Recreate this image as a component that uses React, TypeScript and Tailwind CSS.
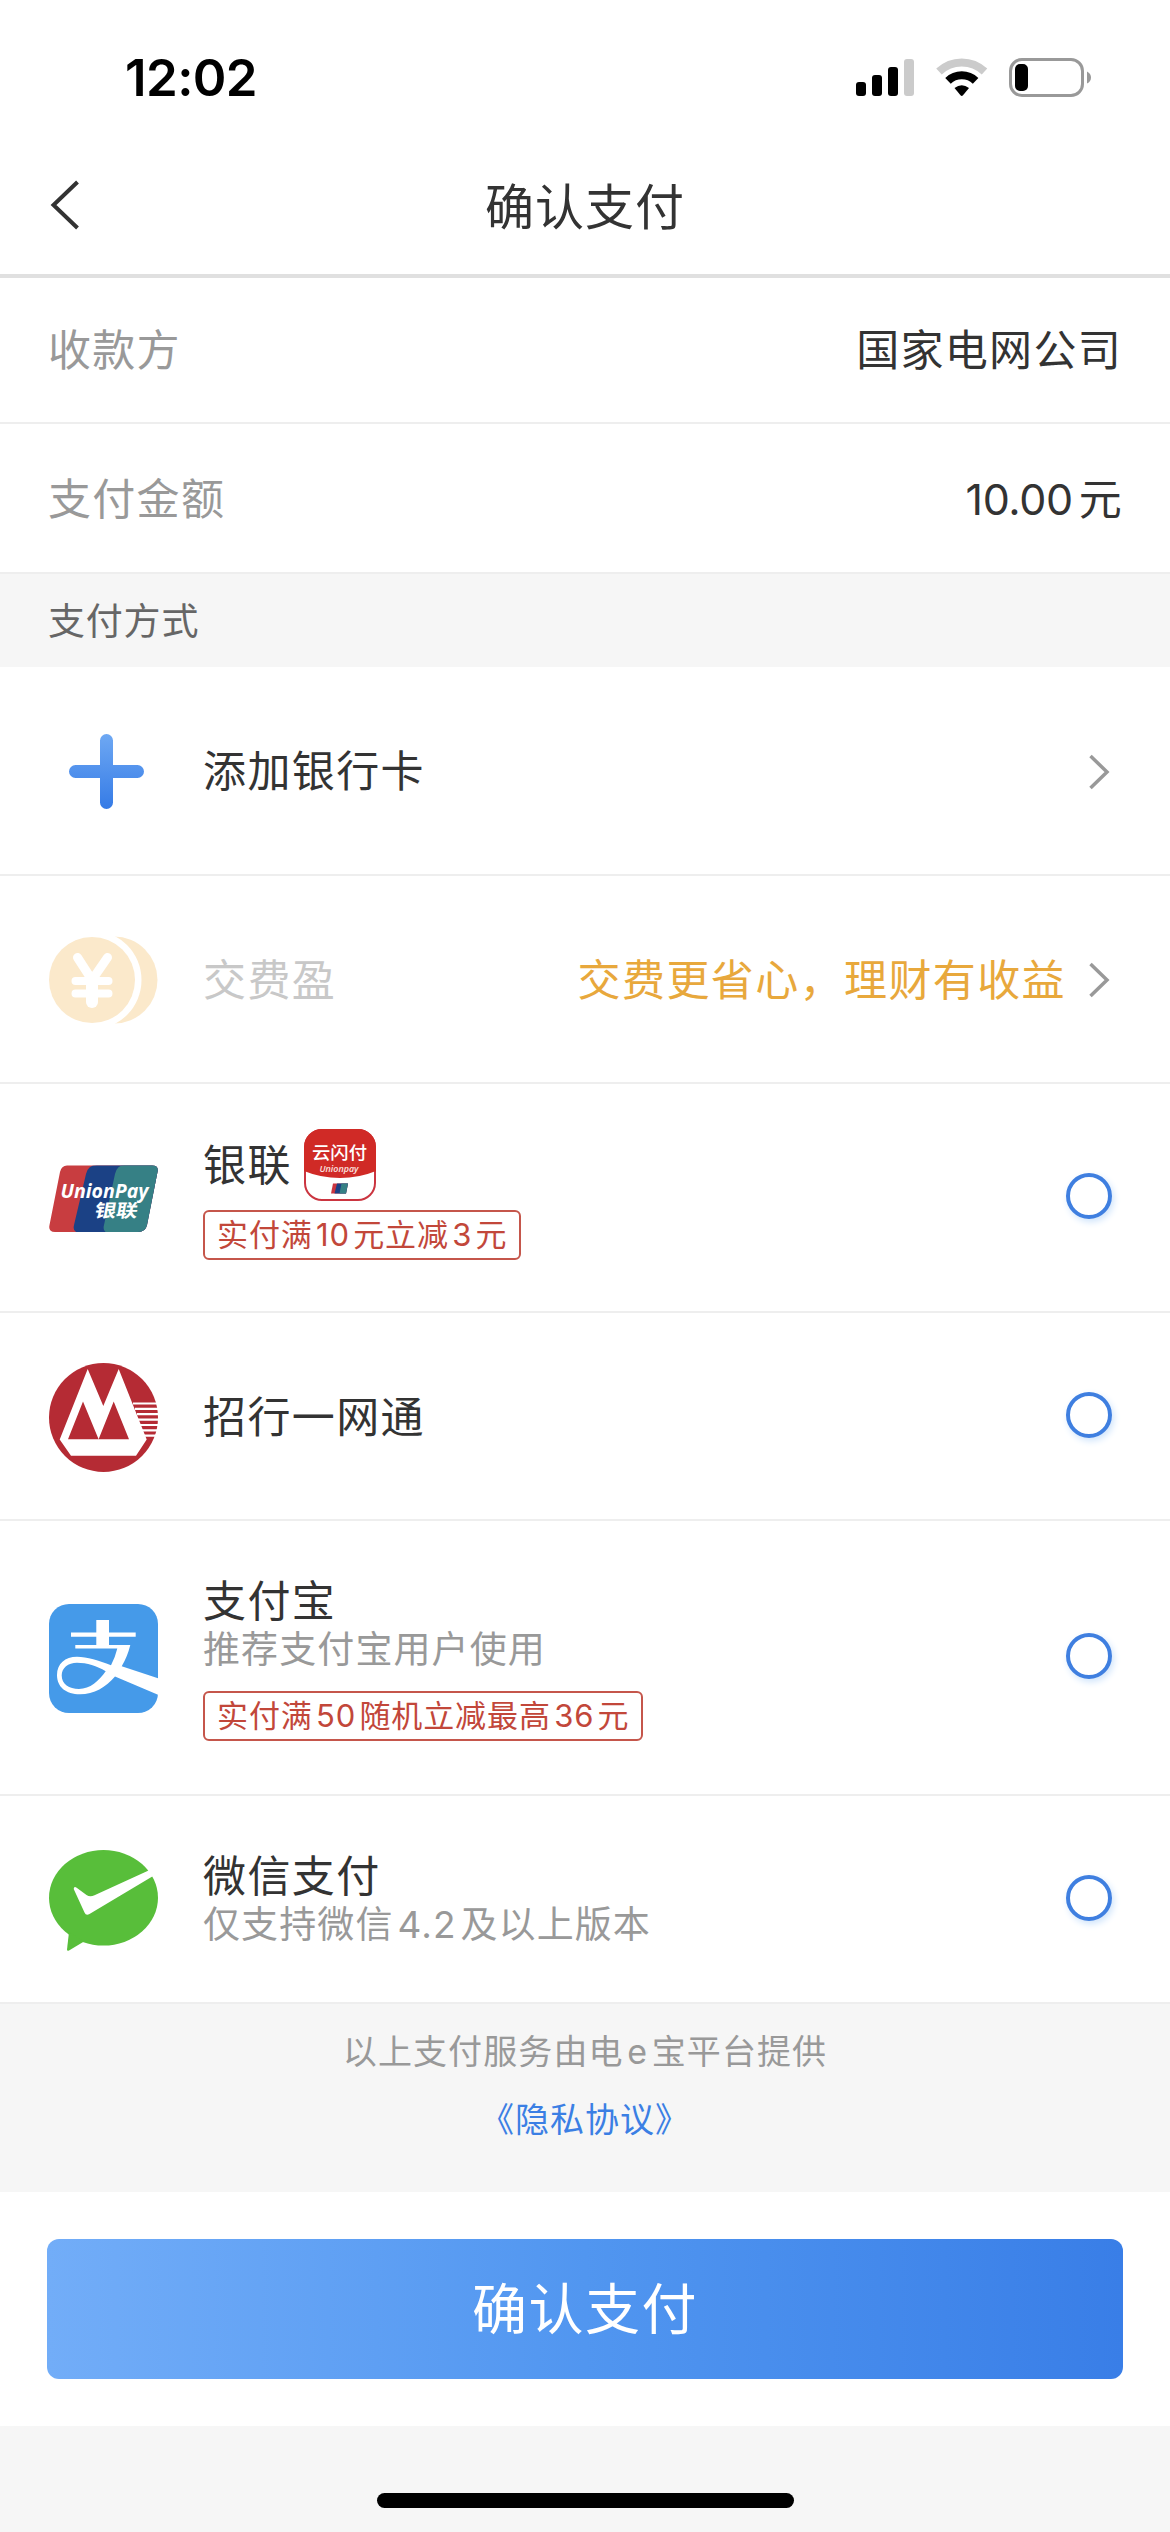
import React from "react";

const FONT = "font-['Inter','Noto_Sans_CJK_SC',sans-serif]";

// Latin runs inside Chinese text get a little air on both sides
function Mixed({ text }: { text: string }) {
  return (
    <>
      {text.split(/([\dA-Za-z.]+)/).map((part, i) =>
        i % 2 === 1 ? (
          <span key={i} className={text.startsWith(part) ? "mr-[0.14em] tracking-[-0.4px]" : "ml-[0.11em] mr-[0.1em]"}>
            {part}
          </span>
        ) : (
          part
        )
      )}
    </>
  );
}

function StatusBar() {
  return (
    <div className="flex h-[118px] items-end justify-between pb-[13px] pl-[125px] pr-[79px]">
      <span className="text-[51px] leading-[54px] font-semibold tracking-[-0.6px] text-black">12:02</span>
      <svg width="235" height="39" viewBox="0 0 235 39" className="mb-[8px]">
        <rect x="0" y="24" width="10" height="14" rx="3" />
        <rect x="16" y="17" width="10" height="21" rx="3" />
        <rect x="32" y="9" width="10" height="29" rx="3" />
        <rect x="48" y="1" width="10" height="37" rx="3" fill="#cbcbcb" />
        <path d="M83 13.500A33 33 0 0 1 128.500 13.500" fill="none" stroke="#cbcbcb" strokeWidth="8" />
        <path d="M92 22.800A20 20 0 0 1 119.600 22.800" fill="none" stroke="#000" strokeWidth="8" />
        <path d="M98.500 30Q105.700 24.500 113 30L107 37.300Q105.700 38.600 104.500 37.300Z" />
        <rect x="154.500" y="1.500" width="72" height="36" rx="11.500" fill="none" stroke="#999" strokeWidth="3" />
        <rect x="159" y="6" width="13" height="27" rx="5" />
        <path d="M231 13.500Q235 15.500 235 19.500Q235 23.500 231 25.500Z" fill="#999" />
      </svg>
    </div>
  );
}

function NavBar() {
  return (
    <div className="flex h-[160px] items-center border-b-4 border-[#e0e0e0] pt-[18px] pl-[49px] pr-[49px]">
      <svg width="32" height="54" viewBox="0 0 32 54" fill="none" stroke="#333" strokeWidth="4">
        <path d="M28.500 4L4.500 27L28.500 50" />
      </svg>
      <h1 className="flex-1 pt-[5px] text-center text-[49px] leading-[60px] tracking-[1px] text-[#333]">确认支付</h1>
      <div className="w-[32px]" />
    </div>
  );
}

function PlusIcon() {
  return (
    <svg width="109" height="109" viewBox="0 0 109 109">
      <defs>
        <linearGradient id="plus" x1="0" y1="17" x2="0" y2="92" gradientUnits="userSpaceOnUse">
          <stop offset="0" stopColor="#6ea8f3" />
          <stop offset="1" stopColor="#357be6" />
        </linearGradient>
      </defs>
      <path
        d="M57.500 17a6.500 6.500 0 0 1 6.500 6.500V48H88.500a6.500 6.500 0 0 1 0 13H64V85.500a6.500 6.500 0 0 1-13 0V61H26.500a6.500 6.500 0 0 1 0-13H51V23.500a6.500 6.500 0 0 1 6.500-6.500Z"
        fill="url(#plus)"
      />
    </svg>
  );
}

function CoinIcon() {
  return (
    <svg width="109" height="88" viewBox="0 0 109 88">
      <circle cx="65" cy="44" r="43.500" fill="#fbe9cb" />
      <circle cx="43" cy="44" r="49.500" fill="#fff" />
      <circle cx="43" cy="44" r="43" fill="#fbe9cb" />
      <g fill="none" stroke="#fff" strokeLinecap="round">
        <path d="M28.500 21.500L43 44L58.500 21.500" strokeWidth="9" strokeLinejoin="round" />
        <path d="M43 44V66" strokeWidth="12" />
        <path d="M26.500 45H59.500M26.500 57.500H59.500" strokeWidth="8" />
      </g>
    </svg>
  );
}

function UnionPayIcon() {
  return (
    <svg width="109" height="68" viewBox="0 0 109 68">
      <defs>
        <clipPath id="card">
          <path d="M18 0.500H103Q110 0.500 108.500 7L98 60Q96.500 67 89 67H6Q-1 67 0.500 60L11 7Q12.500 0.500 18 0.500Z" />
        </clipPath>
      </defs>
      <g clipPath="url(#card)">
        <rect width="109" height="68" fill="#c83d40" />
        <path d="M48 0H109V68H32Q23 68 25 60L37 9Q39 0 48 0Z" fill="#1b4185" />
        <path d="M76 0H109V68H61Q53 68 55 60L66 9Q68 0 76 0Z" fill="#368085" />
      </g>
      <text x="11.500" y="32.500" textLength="88" lengthAdjust="spacingAndGlyphs" className="font-['Open_Sans',sans-serif] text-[20px] font-bold italic" fill="#fff">
        UnionPay
      </text>
      <text x="54" y="52" transform="skewX(-10)" textLength="43" lengthAdjust="spacingAndGlyphs" className="font-['Noto_Sans_CJK_SC',sans-serif] text-[18px] font-bold" fill="#fff">
        银联
      </text>
    </svg>
  );
}

function QuickPassIcon() {
  return (
    <svg width="72" height="72" viewBox="0 0 72 72">
      <defs>
        <clipPath id="tile">
          <rect width="72" height="72" rx="18" />
        </clipPath>
      </defs>
      <rect x="1" y="1" width="70" height="70" rx="17" fill="#fff" stroke="#cb3540" strokeWidth="2" />
      <path clipPath="url(#tile)" d="M0 0H72V42Q55 49 36 49Q17 49 0 42Z" fill="#d02a26" />
      <text x="8" y="30" textLength="55" lengthAdjust="spacingAndGlyphs" className="font-['Noto_Sans_CJK_SC',sans-serif] text-[17.500px] font-medium" fill="#fff">
        云闪付
      </text>
      <text x="15.500" y="43" textLength="39" lengthAdjust="spacingAndGlyphs" className="font-['Open_Sans',sans-serif] text-[8.500px] font-semibold italic" fill="#fbe3e0">
        Unionpay
      </text>
      <path d="M29 54.500H44L42 64.500H27Z" fill="#cb3540" />
      <path d="M33 54.500H44L42 64.500H30.500Z" fill="#1b4185" />
      <path d="M37.500 54.500H44L42 64.500H35.500Z" fill="#368085" />
    </svg>
  );
}

function CmbIcon() {
  return (
    <svg width="109" height="109" viewBox="0 0 109 109">
      <circle cx="54.500" cy="54.500" r="54.500" fill="#b52b34" />
      <path d="M84 40.500H109M86 45.800H109M88 51.200H109M89 56.600H109M91 62H109M93 67.300H109M95 72.700H109" stroke="#fff" strokeWidth="2.200" />
      <path d="M38.700 6L54.300 43L69.700 6L97.700 76.600L87 92.800H22L10.700 76.600Z" fill="#fff" />
      <path d="M34 38.500L49.600 76.300H19ZM64.700 38.500L80 76.300H49.600Z" fill="#b52b34" />
    </svg>
  );
}

function AlipayIcon() {
  return (
    <svg width="109" height="109" viewBox="0 0 109 109">
      <path d="M20 0H89A20 20 0 0 1 109 20V89A20 20 0 0 1 89 109H20A20 20 0 0 1 0 89V20A20 20 0 0 1 20 0Z" fill="#459ae9" />
      <path
        fill="#fff"
        fillRule="evenodd"
        d="M47.300 16H60V28.400H86.700V32.700H60V41H81.300Q78.500 52.500 72.700 62.300L109 74.300V90.700L66 72.400C57 83 45 90.300 31 90.300C17 90.300 8 83 8 71C8 60 16 52.800 28 52.800C38 52.800 50 56.500 62 61.300Q66 54 68.300 44.500H26.300V41H47.300V32.700H22V28.400H47.300ZM56.700 67.300C48 62 38 58.800 28 58.800C19 58.800 12.700 64 12.700 71.500C12.700 80 20 85 30 85C41 85 50 77 56.700 67.300Z"
      />
    </svg>
  );
}

function WechatIcon() {
  return (
    <svg width="109" height="101" viewBox="0 0 109 101">
      <ellipse cx="54.500" cy="47.800" rx="54.500" ry="47.800" fill="#58be3a" />
      <path d="M20 82L18 99.500Q18 101.500 20 100.500L35 91.500Z" fill="#58be3a" />
      <path
        d="M24.700 39Q25 35.500 28 38L37.500 45Q41 47.500 45.500 45.300L98.500 21Q104 17 109 12V24L103.300 26.500L40.500 64Q37 66 35.500 62.500Z"
        fill="#fff"
      />
    </svg>
  );
}

function Chevron() {
  return (
    <svg width="24" height="38" viewBox="0 0 24 38" fill="none" stroke="#999" strokeWidth="3.500">
      <path d="M3.500 3L20 19L3.500 35" />
    </svg>
  );
}

function Radio() {
  return <div className="mr-[11px] mb-[5px] h-[46px] w-[46px] rounded-full border-4 border-[#3f7fe0] shadow-[2px_3px_7px_#cfe4fb]" />;
}

function Badge({ text }: { text: string }) {
  return (
    <div className="w-fit rounded-[6px] border-2 border-[#c5564b] px-[12px] text-[31px] leading-[46px] tracking-[0.9px] text-[#c2473a]">
      <Mixed text={text} />
    </div>
  );
}

interface Method {
  name: string;
  icon: React.ReactNode;
  height: string;
  nameIcon?: React.ReactNode;
  note?: string;
  badge?: string;
}

const methods: Method[] = [
  { name: "银联", icon: <UnionPayIcon />, height: "h-[229px]", nameIcon: <QuickPassIcon />, badge: "实付满10元立减3元" },
  { name: "招行一网通", icon: <CmbIcon />, height: "h-[208px]" },
  { name: "支付宝", icon: <AlipayIcon />, height: "h-[275px]", note: "推荐支付宝用户使用", badge: "实付满50随机立减最高36元" },
  { name: "微信支付", icon: <WechatIcon />, height: "h-[208px]", note: "仅支持微信4.2及以上版本" },
];

function MethodRow({ method }: { method: Method }) {
  return (
    <div className={`flex items-center border-b-2 border-[#eeeeee] pt-[2px] pl-[49px] pr-[47px] ${method.height}`}>
      <div className="w-[154px] shrink-0">{method.icon}</div>
      <div className="flex-1">
        <div className="flex items-center gap-[12px]">
          <span className="text-[43px] leading-[50px] tracking-[1.4px]">{method.name}</span>
          {method.nameIcon}
        </div>
        {method.note && (
          <p className="text-[37px] leading-[48px] tracking-[1.100px] text-[#999]">
            <Mixed text={method.note} />
          </p>
        )}
        {method.badge && (
          <div className={method.note ? "mt-[17px]" : "mt-[9px] mb-[9px]"}>
            <Badge text={method.badge} />
          </div>
        )}
      </div>
      <Radio />
    </div>
  );
}

export default function App() {
  return (
    <div className={`flex h-[2532px] w-[1170px] flex-col overflow-hidden bg-white text-[#333] ${FONT}`}>
      <StatusBar />
      <NavBar />

      {/* Order summary */}
      <div className="flex h-[146px] items-center justify-between border-b-2 border-[#eeeeee] px-[48px] pt-[1px] text-[43px] tracking-[1.3px]">
        <span className="text-[#999]">收款方</span>
        <span>国家电网公司</span>
      </div>
      <div className="flex h-[150px] items-center justify-between border-b-2 border-[#eeeeee] pt-[2px] pl-[48px] pr-[47px] text-[43px] tracking-[1.3px]">
        <span className="text-[#999]">支付金额</span>
        <span>
          <Mixed text="10.00元" />
        </span>
      </div>

      <div className="flex h-[93px] items-center bg-[#f6f6f6] px-[48px] pt-[2px] text-[37px] tracking-[0.8px] text-[#666]">支付方式</div>

      {/* Payment methods */}
      <div className="flex h-[209px] items-center border-b-2 border-[#eeeeee] pt-[2px] pl-[49px] pr-[59px]">
        <div className="w-[154px]">
          <PlusIcon />
        </div>
        <span className="flex-1 text-[43px] tracking-[1.4px]">添加银行卡</span>
        <Chevron />
      </div>
      <div className="flex h-[208px] items-center border-b-2 border-[#eeeeee] pt-[2px] pl-[49px] pr-[59px]">
        <div className="w-[154px]">
          <CoinIcon />
        </div>
        <span className="flex-1 text-[43px] tracking-[1.4px] text-[#c8c8c8]">交费盈</span>
        <span className="mr-[21px] text-[43px] tracking-[1.4px] text-[#e8a83c]">交费更省心，理财有收益</span>
        <Chevron />
      </div>
      {methods.map((method) => (
        <MethodRow key={method.name} method={method} />
      ))}

      <div className="flex h-[188px] flex-col items-center bg-[#f6f6f6] pt-[24px] text-[34px] tracking-[1.100px]">
        <p className="leading-[48px] text-[#999]">
          <Mixed text="以上支付服务由电e宝平台提供" />
        </p>
        <a className="mt-[20px] leading-[48px] tracking-[1px] text-[#3b7fe4]">《隐私协议》</a>
      </div>

      <div className="h-[234px] bg-white px-[47px] pt-[47px]">
        <button className="h-[140px] w-full rounded-[12px] bg-linear-to-r from-[#72adf8] via-[#5196f0] to-[#397ee7] pt-[1px] text-[55px] tracking-[1.5px] text-white">
          确认支付
        </button>
      </div>

      <div className="flex flex-1 justify-center bg-[#f6f6f6] pt-[67px]">
        <div className="h-[15px] w-[417px] rounded-full bg-black" />
      </div>
    </div>
  );
}
